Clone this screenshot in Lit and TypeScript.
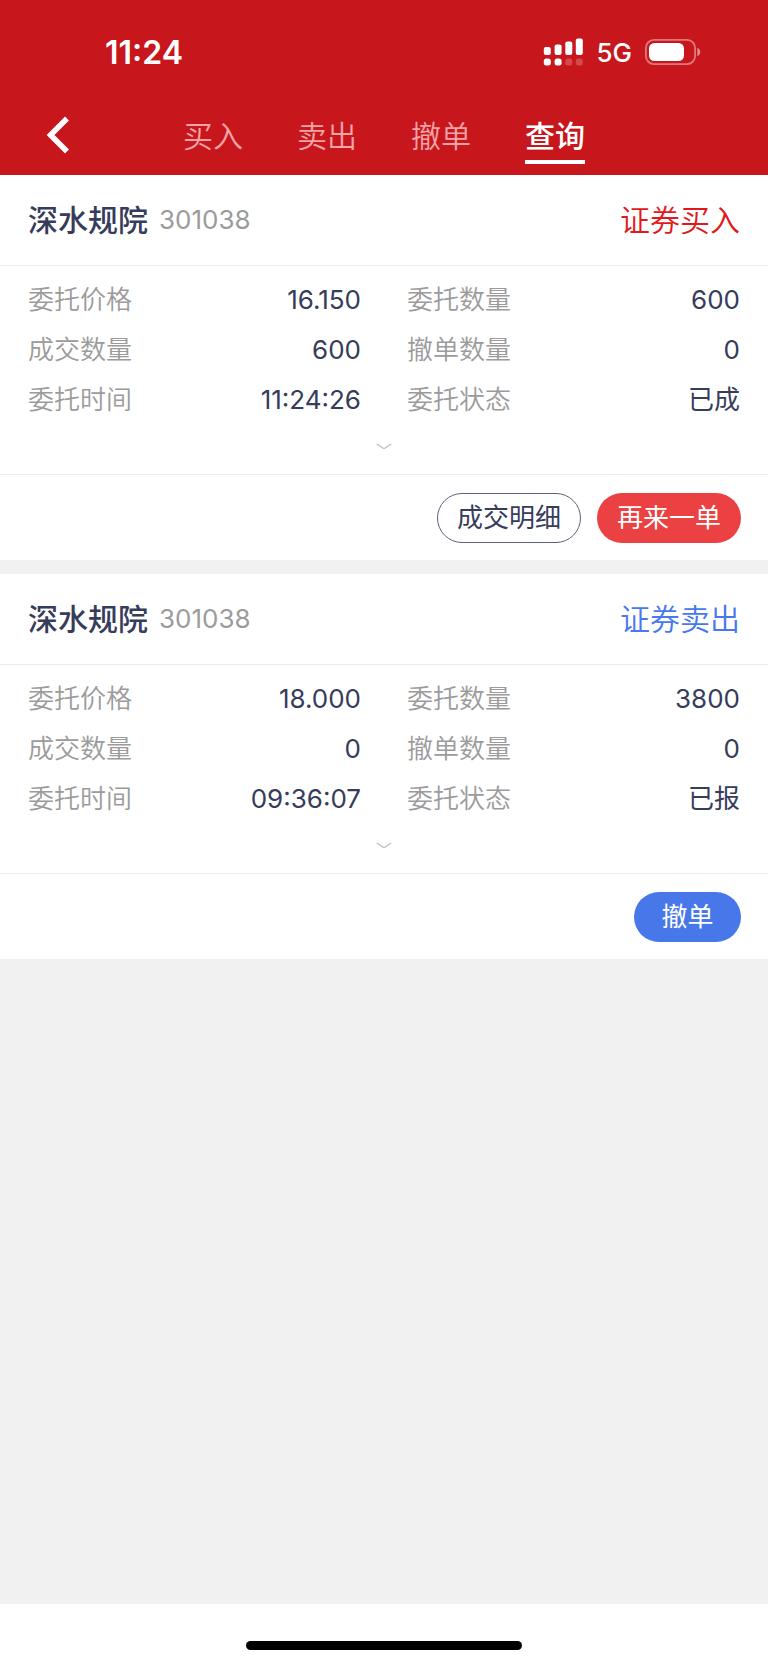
import { LitElement, html, css } from "lit";
import { customElement, property, state } from "lit/decorators.js";

interface Action {
  label: string;
  kind: "outline" | "red" | "blue";
}

interface Order {
  name: string;
  code: string;
  side: "buy" | "sell";
  sideLabel: string;
  fields: [string, string][];
  actions: Action[];
}

const ORDERS: Order[] = [
  {
    name: "深水规院",
    code: "301038",
    side: "buy",
    sideLabel: "证券买入",
    fields: [
      ["委托价格", "16.150"],
      ["委托数量", "600"],
      ["成交数量", "600"],
      ["撤单数量", "0"],
      ["委托时间", "11:24:26"],
      ["委托状态", "已成"],
    ],
    actions: [
      { label: "成交明细", kind: "outline" },
      { label: "再来一单", kind: "red" },
    ],
  },
  {
    name: "深水规院",
    code: "301038",
    side: "sell",
    sideLabel: "证券卖出",
    fields: [
      ["委托价格", "18.000"],
      ["委托数量", "3800"],
      ["成交数量", "0"],
      ["撤单数量", "0"],
      ["委托时间", "09:36:07"],
      ["委托状态", "已报"],
    ],
    actions: [{ label: "撤单", kind: "blue" }],
  },
];

@customElement("status-bar")
class StatusBar extends LitElement {
  static styles = css`
    :host {
      display: flex;
      align-items: center;
      justify-content: space-between;
      height: 104px;
      padding: 0 67px 0 105px;
      color: #fff;
      font-family: Inter, sans-serif;
    }
    .time {
      font-size: 32px;
      font-weight: 600;
    }
    .indicators {
      display: flex;
      align-items: center;
      gap: 13px;
    }
    .network {
      font-size: 26px;
      font-weight: 500;
    }
    svg {
      display: block;
    }
  `;

  render() {
    return html`
      <span class="time">11:24</span>
      <div class="indicators">
        <svg width="40" height="28" viewBox="0 0 40 28" fill="#fff" aria-hidden="true">
          <rect x="0.8" y="9" width="7" height="8" rx="2" />
          <rect x="11.6" y="6.5" width="7" height="10.5" rx="2" />
          <rect x="22.3" y="3.5" width="7" height="13.5" rx="2" />
          <rect x="32.8" y="0.5" width="7" height="16.5" rx="2" />
          <rect x="0.8" y="20.5" width="7" height="7" rx="2.5" />
          <rect x="11.6" y="20.5" width="7" height="7" rx="2.5" />
          <rect x="22.3" y="20.5" width="7" height="7" rx="2.5" opacity="0.22" />
          <rect x="32.8" y="20.5" width="7" height="7" rx="2.5" opacity="0.22" />
        </svg>
        <span class="network">5G</span>
        <svg width="56" height="26" viewBox="0 0 56 26" fill="none" aria-hidden="true">
          <rect x="0.9" y="0.9" width="49.2" height="24.2" rx="8" stroke="#fff" stroke-opacity="0.42" stroke-width="1.8" />
          <rect x="4" y="4" width="35" height="18" rx="5.5" fill="#fff" />
          <path d="M52.3 8.8c3.9 1.2 3.9 7.2 0 8.4z" fill="#fff" fill-opacity="0.5" />
        </svg>
      </div>
    `;
  }
}

@customElement("trade-nav")
class TradeNav extends LitElement {
  static styles = css`
    :host {
      display: grid;
      grid-template-columns: 1fr auto 1fr;
      align-items: start;
      height: 71px;
    }
    button {
      border: 0;
      padding: 0;
      background: none;
      color: #fff;
      font: inherit;
    }
    .back {
      justify-self: start;
      margin: 12px 0 0 46px;
    }
    svg {
      display: block;
    }
    .tabs {
      display: flex;
      gap: 54px;
    }
    .tab {
      box-sizing: border-box;
      height: 60px;
      padding: 10px 0 0;
      border-bottom: 4px solid transparent;
      display: flex;
      align-items: flex-start;
      font-size: 30px;
      line-height: 44px;
      color: #f4a3a6;
      font-weight: 350;
    }
    .tab.active {
      color: #fff;
      font-weight: 500;
      border-bottom-color: #fff;
    }
  `;

  @state() private active = 3;

  render() {
    return html`
      <button class="back" aria-label="返回">
        <svg width="24" height="38" viewBox="0 0 24 38" fill="none" stroke="#fff" stroke-width="5.5">
          <path d="M21 2.5 4.5 19 21 35.5" />
        </svg>
      </button>
      <nav class="tabs">
        ${["买入", "卖出", "撤单", "查询"].map(
          (t, i) => html`<button
            class="tab ${i === this.active ? "active" : ""}"
            @click=${() => (this.active = i)}
          >${t}</button>`
        )}
      </nav>
    `;
  }
}

@customElement("order-card")
class OrderCard extends LitElement {
  static styles = css`
    :host {
      display: block;
      background: #fff;
      color: #363c5a;
    }
    .head {
      display: flex;
      align-items: center;
      height: 90px;
      padding: 0 28px;
      border-bottom: 1px solid #ebebeb;
      line-height: 50px;
    }
    .name {
      margin: 0;
      font-size: 30px;
      font-weight: 500;
    }
    .code {
      margin-left: 11px;
      font-size: 26px;
      color: #9b9b9b;
    }
    .side {
      margin-left: auto;
      font-size: 30px;
      font-weight: 350;
    }
    .side.buy {
      color: #e1191b;
    }
    .side.sell {
      color: #4877ee;
    }
    .fields {
      display: grid;
      grid-template-columns: 1fr 1fr;
      column-gap: 46px;
      margin: 0;
      padding: 9px 28px 0;
    }
    .field {
      display: flex;
      justify-content: space-between;
      font-size: 26px;
      line-height: 50px;
    }
    dt {
      color: #9b9b9b;
      font-weight: 350;
    }
    dd {
      margin: 0;
    }
    .expand {
      display: flex;
      justify-content: center;
      align-items: center;
      width: 100%;
      height: 49px;
      padding: 0 0 7px;
      border: 0;
      background: none;
    }
    .actions {
      display: flex;
      justify-content: flex-end;
      gap: 16px;
      padding: 18px 27px 17px;
      border-top: 1px solid #ebebeb;
    }
    .action {
      box-sizing: border-box;
      height: 50px;
      padding: 0 19px;
      min-width: 107px;
      border: 1px solid transparent;
      border-radius: 25px;
      font: inherit;
      font-size: 26px;
      line-height: 48px;
      color: #fff;
    }
    .outline {
      background: #fff;
      border-color: #5b607b;
      color: #363c5a;
    }
    .red {
      background: #ec4142;
    }
    .blue {
      background: #4877ea;
    }
  `;

  @property({ attribute: false }) order!: Order;

  render() {
    const o = this.order;
    return html`
      <header class="head">
        <h2 class="name">${o.name}</h2>
        <span class="code">${o.code}</span>
        <span class="side ${o.side}">${o.sideLabel}</span>
      </header>
      <dl class="fields">
        ${o.fields.map(
          ([k, v]) => html`<div class="field">
            <dt>${k}</dt>
            <dd>${v}</dd>
          </div>`
        )}
      </dl>
      <button class="expand" aria-label="展开">
        <svg width="16" height="7" viewBox="0 0 16 7" fill="none" stroke="#c3c4ce" stroke-width="1.4">
          <path d="M0.8 1 7 5.2Q8 5.8 9 5.2L15.2 1" />
        </svg>
      </button>
      <footer class="actions">
        ${o.actions.map((a) => html`<button class="action ${a.kind}">${a.label}</button>`)}
      </footer>
    `;
  }
}

@customElement("app-root")
class AppRoot extends LitElement {
  static styles = css`
    :host {
      display: flex;
      flex-direction: column;
      min-height: 100vh;
      background: #f1f1f1;
      font-family: Inter, "Noto Sans CJK SC", sans-serif;
    }
    .top {
      background: #c7161c;
    }
    .orders {
      flex: 1;
      display: flex;
      flex-direction: column;
      gap: 14px;
    }
    .home {
      display: flex;
      justify-content: center;
      align-items: center;
      height: 61px;
      padding-top: 22px;
      box-sizing: border-box;
      background: #fff;
    }
    .indicator {
      width: 36%;
      height: 9px;
      border-radius: 5px;
      background: #000;
    }
  `;

  render() {
    return html`
      <header class="top">
        <status-bar></status-bar>
        <trade-nav></trade-nav>
      </header>
      <main class="orders">
        ${ORDERS.map((o) => html`<order-card .order=${o}></order-card>`)}
      </main>
      <footer class="home"><div class="indicator"></div></footer>
    `;
  }
}
